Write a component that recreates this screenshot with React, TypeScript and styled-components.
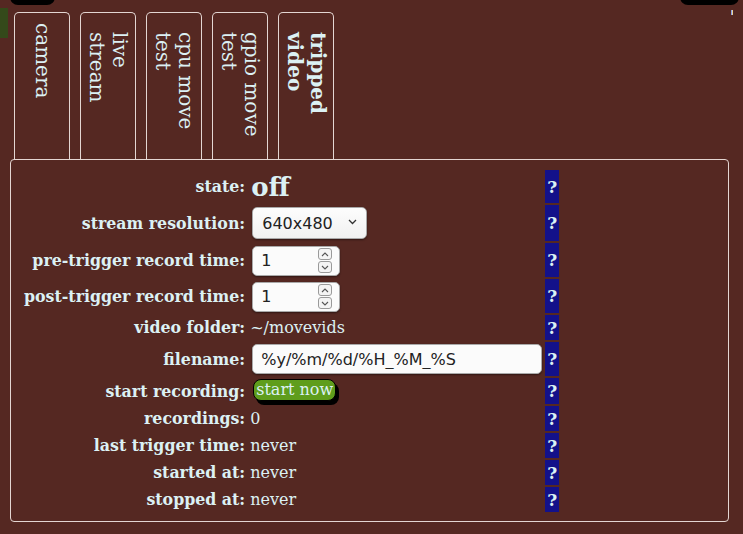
import React from "react";
import styled, { createGlobalStyle } from "styled-components";

const Global = createGlobalStyle`
  html, body { margin: 0; padding: 0; background: #552822; }
  body { font-family: "DejaVu Serif", serif; color: #dcf1f4; width: 743px; height: 534px; overflow: hidden; }
`;

const Page = styled.div`
  position: relative;
  padding: 12px 14px 0 10px;
`;

const CornerBlob = styled.div<{ $side: "left" | "right" }>`
  position: absolute;
  top: -10px;
  ${(p) => (p.$side === "left" ? "left: 10px; width: 45px;" : "left: 680px; width: 59px;")}
  height: 15px;
  background: #000;
  border-radius: 0 0 8px 8px;
`;

const SideFlag = styled.div`
  position: absolute;
  left: 0;
  top: 8px;
  width: 8px;
  height: 30px;
  background: #34491a;
`;

const Tick = styled.div`
  position: absolute;
  left: 731px;
  top: 10px;
  width: 2px;
  height: 5px;
  background: linear-gradient(90deg, #8aa0e8 50%, #e8d49a 50%);
`;

const TabRow = styled.div`
  display: flex;
  gap: 10px;
  margin-left: 4px;
  height: 147px;
`;

const Tab = styled.div<{ $pad: number }>`
  box-sizing: border-box;
  width: 56px;
  height: 147px;
  border: 1px solid #e4d6d2;
  border-bottom: none;
  border-radius: 5px 5px 0 0;
  display: flex;
  justify-content: center;
  padding-top: ${(p) => p.$pad}px;
`;

const TabLabel = styled.span<{ $active?: boolean }>`
  writing-mode: vertical-rl;
  font-family: "DejaVu Serif", serif;
  font-size: 20px;
  line-height: 23px;
  font-weight: ${(p) => (p.$active ? 700 : 400)};
  color: #dcf1f4;
`;

const Panel = styled.div`
  box-sizing: border-box;
  width: 719px;
  height: 363px;
  border: 1px solid #e4d6d2;
  border-radius: 4px;
  padding: 8px 10px;
`;

const Table = styled.table`
  border-collapse: separate;
  border-spacing: 2px;
`;

const Row = styled.tr<{ $h: number }>`
  height: ${(p) => p.$h}px;
`;

const Label = styled.th`
  text-align: right;
  font-weight: 700;
  font-size: 15.8px;
  padding: 0 1px;
  vertical-align: middle;
  white-space: nowrap;
`;

const Value = styled.td`
  font-size: 16px;
  padding: 0 1px 0 2px;
  vertical-align: middle;
  white-space: nowrap;
`;

const Help = styled.td`
  box-sizing: border-box;
  width: 13px;
  padding: 0 2px;
  background: #13118a;
  font-weight: 700;
  font-size: 17px;
  text-align: center;
  vertical-align: middle;
  color: #dcf1f4;
`;

const BigState = styled.span`
  font-size: 26px;
  font-weight: 700;
  margin-left: 1px;
`;

const SelectWrap = styled.div`
  position: relative;
  display: inline-block;
  margin: 0 0 0 2px;
  vertical-align: middle;
`;

const Select = styled.select`
  appearance: none;
  box-sizing: border-box;
  width: 115px;
  height: 32px;
  border: 1px solid #a9a9a9;
  border-radius: 5px;
  background: linear-gradient(#fdfdfd, #f1f1f1);
  box-shadow: 0 1px 2px rgba(0, 0, 0, 0.45);
  font-family: "DejaVu Sans", sans-serif;
  font-size: 16px;
  color: #222;
  padding: 0 0 0 9px;
`;

const Chevron = styled.svg`
  position: absolute;
  right: 10px;
  top: 12px;
  pointer-events: none;
`;

const NumberBox = styled.div`
  box-sizing: border-box;
  display: inline-flex;
  align-items: center;
  width: 88px;
  height: 30px;
  margin: 1px 0 0 2px;
  border: 1px solid #a9a9a9;
  border-radius: 5px;
  background: #fbfbfb;
  box-shadow: 0 1px 2px rgba(0, 0, 0, 0.45);
  vertical-align: middle;
`;

const NumberInput = styled.input`
  flex: 1;
  min-width: 0;
  border: none;
  background: transparent;
  font-family: "DejaVu Sans", sans-serif;
  font-size: 16px;
  color: #222;
  padding: 0 0 0 8px;
  outline: none;
`;

const Spinner = styled.div`
  display: flex;
  flex-direction: column;
  gap: 1px;
  margin-right: 7px;
`;

const SpinBtn = styled.div`
  width: 12px;
  height: 10px;
  border: 1px solid #9a9a9a;
  border-radius: 3px;
  background: #f4f4f4;
  display: flex;
  align-items: center;
  justify-content: center;
`;

const TextInput = styled.input`
  box-sizing: border-box;
  width: 290px;
  height: 30px;
  margin: 0 0 0 2px;
  border: 1px solid #a9a9a9;
  border-radius: 5px;
  background: #fbfbfb;
  box-shadow: 0 1px 2px rgba(0, 0, 0, 0.45);
  font-family: "DejaVu Sans", sans-serif;
  font-size: 16px;
  color: #222;
  padding: 0 8px;
  vertical-align: middle;
`;

const GoButton = styled.button`
  box-sizing: border-box;
  height: 22px;
  margin: 0 0 2px 3px;
  padding: 0 2px;
  border: 1px solid #000;
  border-radius: 8px;
  background: #5f9d1c;
  box-shadow: 3px 4px 0 #000;
  font-family: "DejaVu Serif", serif;
  font-size: 16px;
  line-height: 18px;
  color: #dcf1f4;
  vertical-align: middle;
`;

const tabs = [
  { label: "camera", pad: 10 },
  { label: "live stream", pad: 19 },
  { label: "cpu move test", pad: 19 },
  { label: "gpio move test", pad: 19 },
  { label: "tripped video", pad: 19, active: true },
];

const Arrow = ({ up }: { up?: boolean }) => (
  <svg width="8" height="5" viewBox="0 0 8 5">
    <path
      d={up ? "M1 4 L4 1 L7 4" : "M1 1 L4 4 L7 1"}
      fill="none"
      stroke="#555"
      strokeWidth="1.1"
    />
  </svg>
);

const Num = ({ v }: { v: string }) => (
  <NumberBox>
    <NumberInput defaultValue={v} />
    <Spinner>
      <SpinBtn>
        <Arrow up />
      </SpinBtn>
      <SpinBtn>
        <Arrow />
      </SpinBtn>
    </Spinner>
  </NumberBox>
);

export default function App() {
  return (
    <>
      <Global />
      <Page>
        <CornerBlob $side="left" />
        <CornerBlob $side="right" />
        <SideFlag />
        <Tick />
        <TabRow>
          {tabs.map((t) => (
            <Tab key={t.label} $pad={t.pad}>
              <TabLabel $active={t.active}>
                {t.label.includes(" ") ? (
                  <>
                    {t.label.slice(0, t.label.lastIndexOf(" "))}
                    <br />
                    {t.label.slice(t.label.lastIndexOf(" ") + 1)}
                  </>
                ) : (
                  t.label
                )}
              </TabLabel>
            </Tab>
          ))}
        </TabRow>
        <Panel>
          <Table>
            <tbody>
              <Row $h={33}>
                <Label>state:</Label>
                <Value>
                  <BigState>off</BigState>
                </Value>
                <Help>?</Help>
              </Row>
              <Row $h={36}>
                <Label>stream resolution:</Label>
                <Value>
                  <SelectWrap>
                    <Select defaultValue="640x480">
                      <option>640x480</option>
                      <option>1280x720</option>
                    </Select>
                    <Chevron width="9" height="6" viewBox="0 0 9 6">
                      <path d="M1 1 L4.5 4.5 L8 1" fill="none" stroke="#333" strokeWidth="1.3" />
                    </Chevron>
                  </SelectWrap>
                </Value>
                <Help>?</Help>
              </Row>
              <Row $h={34}>
                <Label>pre-trigger record time:</Label>
                <Value>
                  <Num v="1" />
                </Value>
                <Help>?</Help>
              </Row>
              <Row $h={34}>
                <Label>post-trigger record time:</Label>
                <Value>
                  <Num v="1" />
                </Value>
                <Help>?</Help>
              </Row>
              <Row $h={25}>
                <Label>video folder:</Label>
                <Value>~/movevids</Value>
                <Help>?</Help>
              </Row>
              <Row $h={34}>
                <Label>filename:</Label>
                <Value>
                  <TextInput defaultValue="%y/%m/%d/%H_%M_%S" />
                </Value>
                <Help>?</Help>
              </Row>
              <Row $h={26}>
                <Label>start recording:</Label>
                <Value>
                  <GoButton>start now</GoButton>
                </Value>
                <Help>?</Help>
              </Row>
              <Row $h={25}>
                <Label>recordings:</Label>
                <Value>0</Value>
                <Help>?</Help>
              </Row>
              <Row $h={25}>
                <Label>last trigger time:</Label>
                <Value>never</Value>
                <Help>?</Help>
              </Row>
              <Row $h={25}>
                <Label>started at:</Label>
                <Value>never</Value>
                <Help>?</Help>
              </Row>
              <Row $h={25}>
                <Label>stopped at:</Label>
                <Value>never</Value>
                <Help>?</Help>
              </Row>
            </tbody>
          </Table>
        </Panel>
      </Page>
    </>
  );
}
